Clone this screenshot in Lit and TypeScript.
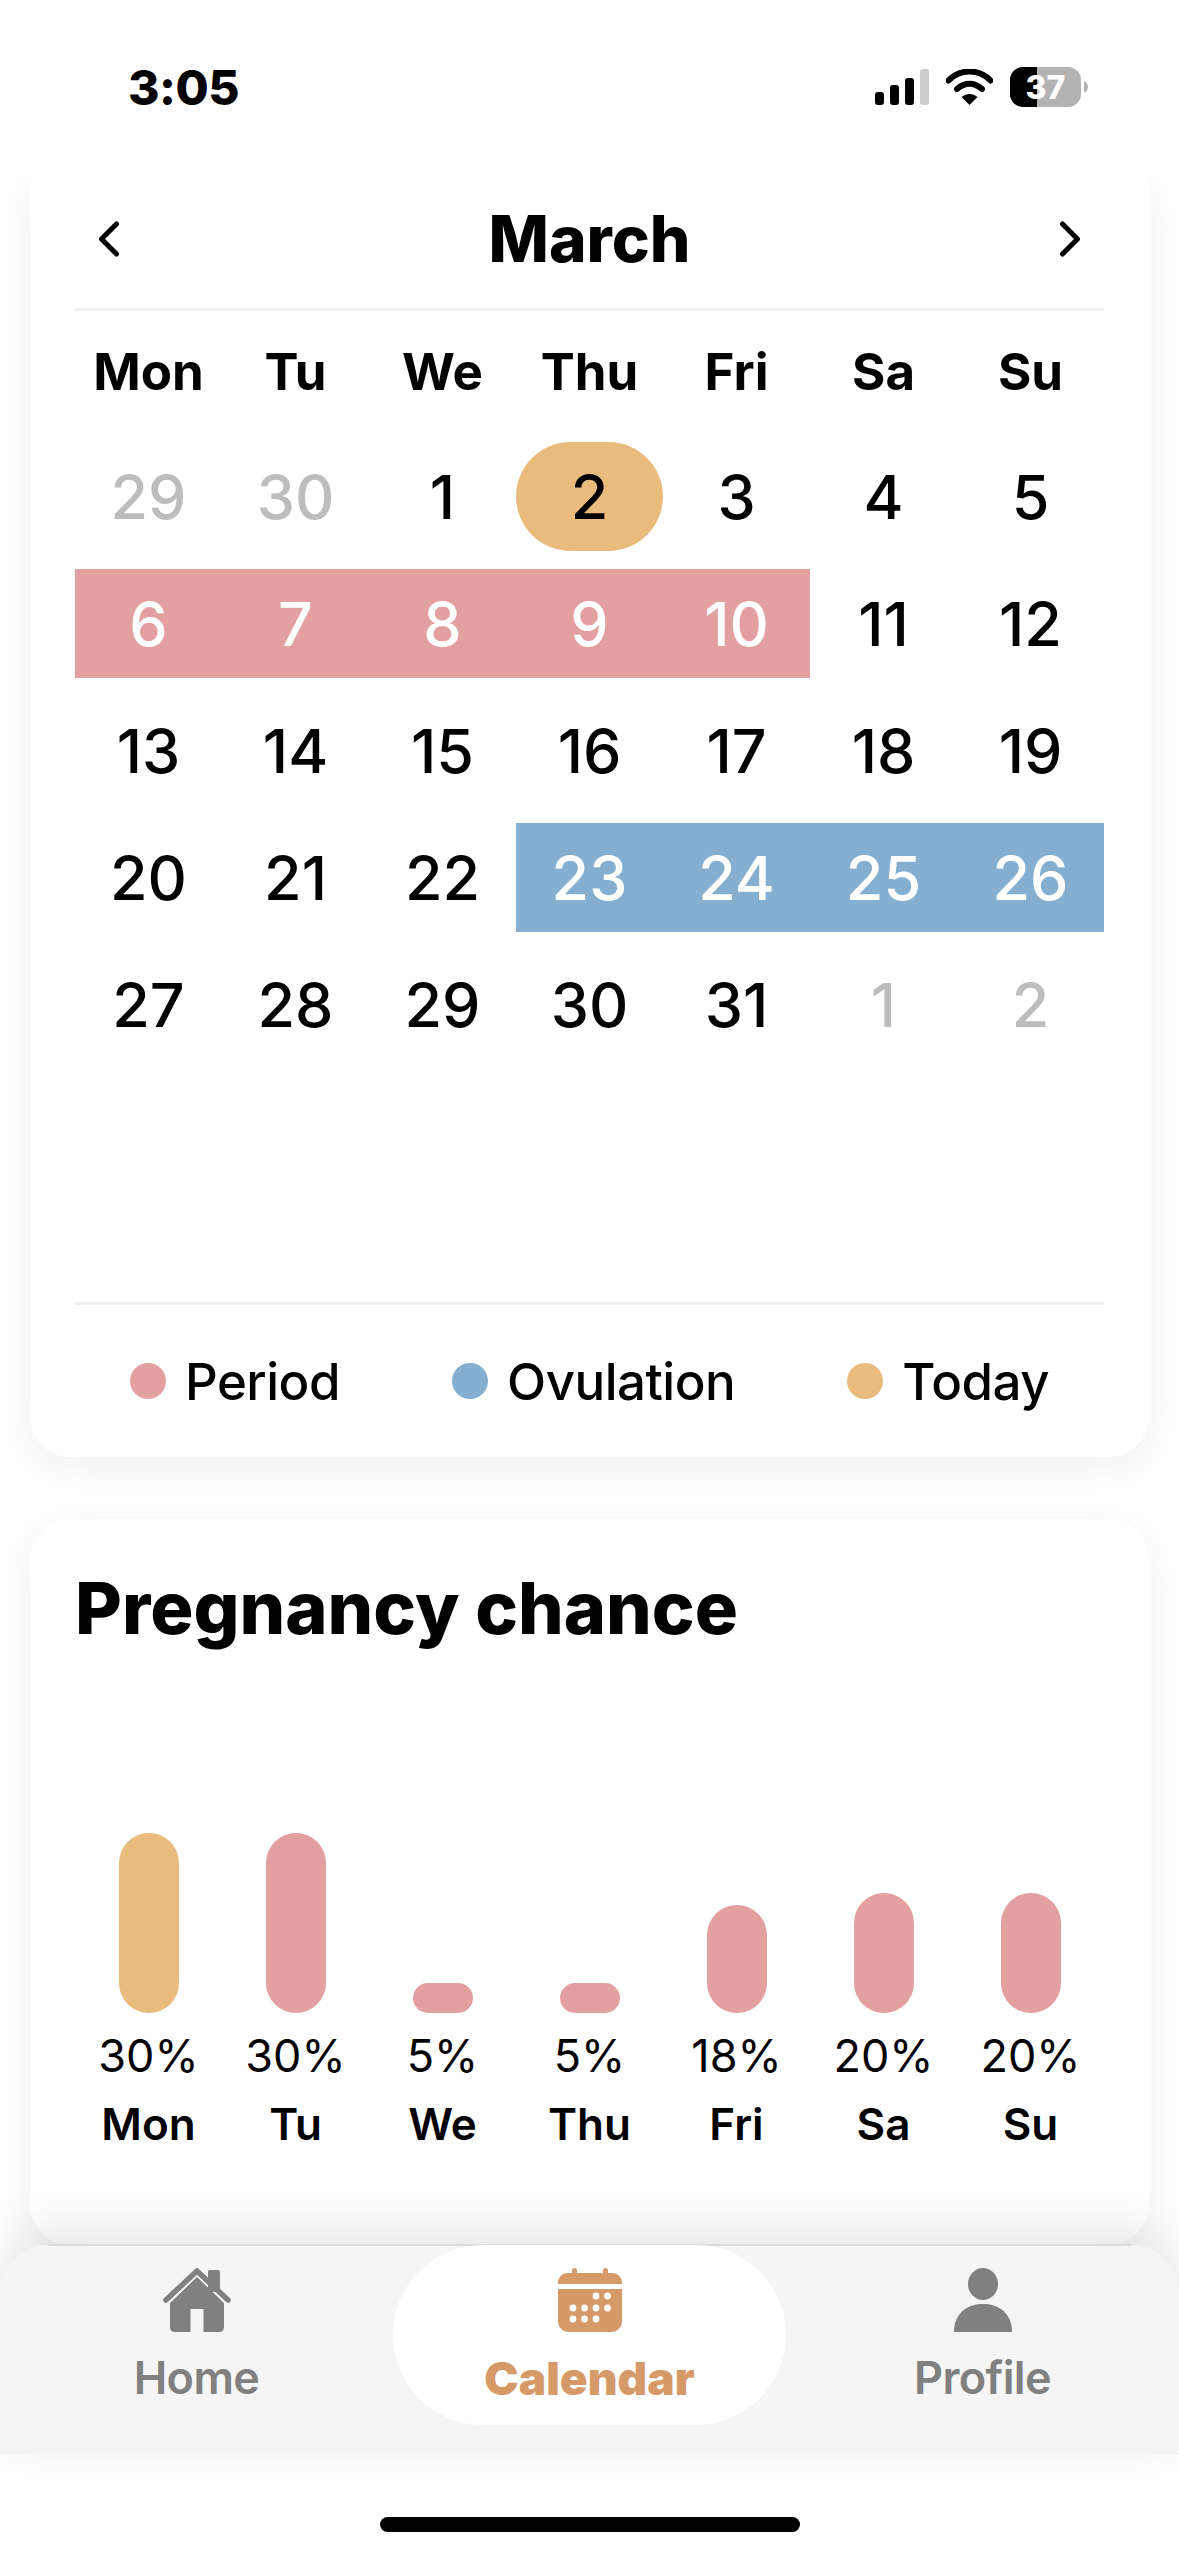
import { LitElement, html, css, svg } from 'lit';
import { customElement } from 'lit/decorators.js';

type Mark = 'muted' | 'today' | 'period' | 'ovulation' | '';

interface Day {
  label: number;
  mark: Mark;
}

const WEEKDAYS = ['Mon', 'Tu', 'We', 'Thu', 'Fri', 'Sa', 'Su'];

const markFor = (n: number): Mark => {
  if (n === 2) return 'today';
  if (n >= 6 && n <= 10) return 'period';
  if (n >= 23 && n <= 26) return 'ovulation';
  return '';
};

const DAYS: Day[] = [
  { label: 29, mark: 'muted' },
  { label: 30, mark: 'muted' },
  ...Array.from({ length: 31 }, (_, i) => ({ label: i + 1, mark: markFor(i + 1) })),
  { label: 1, mark: 'muted' },
  { label: 2, mark: 'muted' },
];

const CHANCES = [30, 30, 5, 5, 18, 20, 20];

const LEGEND = [
  { name: 'Period', color: 'period' },
  { name: 'Ovulation', color: 'ovulation' },
  { name: 'Today', color: 'today' },
];

const chevron = (d: string) => html`<svg class="chevron" viewBox="0 0 24 40">
  <path d=${d} fill="none" stroke="#000" stroke-width="5" stroke-linecap="round" stroke-linejoin="round" />
</svg>`;

const homeIcon = svg`<path d="M45 4c0-1.100.9-2 2-2h8c1.100 0 2 .9 2 2v20H45z"/>
  <path d="M3 32 34 3l31 29" fill="none" stroke="#808080" stroke-width="5.500" stroke-linecap="round" stroke-linejoin="round"/>
  <path d="M34 9 61 35v24c0 3-2 5-5 5H40.500V41h-13v23H12c-3 0-5-2-5-5V35z"/>`;

const calendarDots = [
  [38, 28], [49.5, 28],
  [15, 40], [26.5, 40], [38, 40], [49.5, 40],
  [15, 51], [26.5, 51], [38, 51],
];

const calendarIcon = svg`<path d="M14 5V2.500C14 1 15 0 16.500 0S19 1 19 2.500V5h26V2.500C45 1 46 0 47.500 0S50 1 50 2.500V5h4c6 0 10 4.500 10 10v1H0v-1C0 9.500 4 5 10 5z"/>
  <path d="M0 21h64v32c0 6-4.500 11-11 11H11C4.500 64 0 59 0 53z"/>
  ${calendarDots.map(([x, y]) => svg`<circle cx=${x} cy=${y} r="3.400" fill="#fff"/>`)}`;

const profileIcon = svg`<ellipse cx="30" cy="16" rx="15" ry="16"/>
  <path d="M1 64c0-2 .2-4 .5-6C4 44 15 36 30 36s26 8 28.500 22c.3 2 .5 4 .5 6z"/>`;

@customElement('app-root')
export class AppRoot extends LitElement {
  static styles = css`
    :host {
      display: block;
      position: relative;
      height: 2556px;
      overflow: hidden;
      background: #fff;
      font-family: Inter, 'Liberation Sans', sans-serif;
      color: #000;
    }

    .status {
      height: 177px;
      padding: 0 91px 0 128px;
      box-sizing: border-box;
      display: flex;
      justify-content: space-between;
      align-items: flex-start;
    }

    .time {
      margin-top: 63px;
      font-size: 48px;
      line-height: 50px;
      font-weight: 800;
      letter-spacing: -0.5px;
    }

    .status-icons {
      margin-top: 67px;
      display: flex;
      align-items: center;
      gap: 17px;
    }

    .content {
      height: 2068px;
      overflow: hidden;
      padding: 0 30px;
      display: flex;
      flex-direction: column;
      gap: 62px;
    }

    .card {
      flex: none;
      background: #fff;
      border-radius: 40px;
      box-shadow: 0 10px 40px rgba(0, 0, 0, 0.06);
      padding: 0 45px;
    }

    .calendar {
      height: 1280px;
      border-radius: 0 0 40px 40px;
      display: flex;
      flex-direction: column;
    }

    .month {
      height: 134px;
      box-sizing: border-box;
      flex: none;
      display: flex;
      align-items: center;
      justify-content: space-between;
      padding: 0 22px 8px;
      border-bottom: 3px solid #f0f0f0;
    }

    .month h2 {
      margin: 0;
      font-size: 64px;
      font-weight: 800;
    }

    .chevron {
      width: 24px;
      height: 40px;
    }

    .grid {
      margin-top: 4px;
      display: grid;
      grid-template-columns: repeat(7, 147px);
      grid-auto-rows: 109px;
      row-gap: 18px;
    }

    .weekday {
      display: flex;
      align-items: center;
      justify-content: center;
      font-size: 51px;
      font-weight: 700;
      padding-top: 4px;
      box-sizing: border-box;
    }

    .day {
      display: flex;
      align-items: center;
      justify-content: center;
      font-size: 61px;
      font-weight: 500;
      position: relative;
    }

    .day.muted {
      color: #bdbdbd;
    }

    .day.today span.pill {
      position: absolute;
      inset: 0;
      background: #e9bb7d;
      border-radius: 55px;
    }

    .day b {
      position: relative;
      font-weight: inherit;
    }

    .day.period {
      background: #e3a0a0;
      color: #fff;
    }

    .day.ovulation {
      background: #85afd0;
      color: #fff;
    }

    .legend {
      margin-top: auto;
      height: 152px;
      flex: none;
      border-top: 3px solid #f0f0f0;
      display: flex;
      align-items: center;
      padding: 0 55px 0 55px;
      justify-content: space-between;
      font-size: 51px;
      font-weight: 500;
      letter-spacing: -0.5px;
    }

    .legend-item {
      display: flex;
      align-items: center;
      gap: 19px;
    }

    .dot {
      width: 36px;
      height: 36px;
      border-radius: 50%;
    }

    .dot.period,
    .bar.period {
      background: #e3a0a0;
    }

    .dot.ovulation {
      background: #85afd0;
    }

    .dot.today,
    .bar.today {
      background: #e9bb7d;
    }

    .chance {
      height: 726px;
      box-sizing: border-box;
    }

    .chance h2 {
      margin: 0;
      padding-top: 45px;
      font-size: 72px;
      line-height: 87px;
      font-weight: 800;
    }

    .bars {
      margin-top: 182px;
      display: grid;
      grid-template-columns: repeat(7, 147px);
    }

    .bar-col {
      display: flex;
      flex-direction: column;
      align-items: center;
      justify-content: flex-end;
      height: 180px;
    }

    .bar {
      width: 60px;
      border-radius: 30px;
    }

    .bar.short {
      border-radius: 15px;
    }

    .pct {
      text-align: center;
      font-size: 45px;
      line-height: 52px;
      margin-top: 17px;
      font-weight: 400;
    }

    .name {
      text-align: center;
      font-size: 44px;
      line-height: 52px;
      margin-top: 16px;
      font-weight: 600;
    }

    .tabbar {
      position: absolute;
      left: 0;
      right: 0;
      top: 2245px;
      height: 210px;
      background: #f5f5f5;
      border-radius: 48px 48px 0 0;
      box-shadow: 0 -15px 50px rgba(0, 0, 0, 0.1);
      display: grid;
      grid-template-columns: 393px 393px 393px;
    }

    .tabbar::before {
      content: '';
      position: absolute;
      left: 48px;
      right: 48px;
      top: -1px;
      height: 2px;
      background: #dcdcdc;
    }

    .tab {
      height: 180px;
      display: flex;
      flex-direction: column;
      align-items: center;
      color: #808080;
      font-size: 45px;
      font-weight: 600;
      letter-spacing: -0.6px;
      padding-top: 23px;
      box-sizing: border-box;
      position: relative;
    }

    .tab svg {
      height: 64px;
      fill: #808080;
      overflow: visible;
    }

    .tab span {
      margin-top: 19px;
      line-height: 54px;
    }

    .tab.active {
      background: #fff;
      border-radius: 90px;
      color: #d69a68;
      font-size: 46px;
      font-weight: 900;
      letter-spacing: 0;
    }

    .tab.active svg {
      fill: #d69a68;
    }

    .home-indicator {
      position: absolute;
      left: 380px;
      top: 2517px;
      width: 420px;
      height: 15px;
      border-radius: 8px;
      background: #000;
    }
  `;

  private renderStatusIcons() {
    return html`
      <svg width="54" height="36" viewBox="0 0 54 36">
        <rect x="0" y="23" width="9" height="13" rx="3" fill="#000" />
        <rect x="15" y="16" width="9" height="20" rx="3" fill="#000" />
        <rect x="30" y="9" width="9" height="27" rx="3" fill="#000" />
        <rect x="45" y="0" width="9" height="36" rx="3" fill="#ccc" />
      </svg>
      <svg width="47" height="36" viewBox="0 0 47 36">
        <path d="M2.500 11.500C14-.5 33-.5 44.500 11.500" fill="none" stroke="#000" stroke-width="6" stroke-linecap="round" />
        <path d="M11 20c8-7 17-7 25 0" fill="none" stroke="#000" stroke-width="6" stroke-linecap="round" />
        <path d="M15.500 28c5-4 11-4 16 0l-8 8z" fill="#000" />
      </svg>
      <svg width="78" height="40" viewBox="0 0 78 40">
        <rect x="0" y="0" width="71" height="40" rx="13" fill="#b3b3b3" />
        <path d="M13 0h14v40H13C6 40 0 34 0 27V13C0 6 6 0 13 0z" fill="#000" />
        <path d="M74 14c2.500 1 4 3 4 6s-1.500 5-4 6z" fill="#b3b3b3" />
        <text x="35.500" y="32" text-anchor="middle" font-size="32" font-weight="800" fill="#fff">37</text>
      </svg>
    `;
  }

  private renderDay(day: Day) {
    return html`<div class="day ${day.mark}">
      ${day.mark === 'today' ? html`<span class="pill"></span>` : ''}
      <b>${day.label}</b>
    </div>`;
  }

  render() {
    return html`
      <div class="status">
        <div class="time">3:05</div>
        <div class="status-icons">${this.renderStatusIcons()}</div>
      </div>
      <div class="content">
        <section class="card calendar">
          <div class="month">
            ${chevron('M19.500 5 4.500 20l15 15')}
            <h2>March</h2>
            ${chevron('M4.500 5l15 15-15 15')}
          </div>
          <div class="grid">
            ${WEEKDAYS.map((d) => html`<div class="weekday">${d}</div>`)}
            ${DAYS.map((d) => this.renderDay(d))}
          </div>
          <div class="legend">
            ${LEGEND.map(
              (l) => html`<div class="legend-item"><span class="dot ${l.color}"></span>${l.name}</div>`,
            )}
          </div>
        </section>
        <section class="card chance">
          <h2>Pregnancy chance</h2>
          <div class="bars">
            ${CHANCES.map(
              (pct, i) => html`<div class="bar-col">
                <div
                  class="bar ${i === 0 ? 'today' : 'period'} ${pct < 10 ? 'short' : ''}"
                  style="height:${pct * 6}px"
                ></div>
              </div>`,
            )}
            ${CHANCES.map((pct) => html`<div class="pct">${pct}%</div>`)}
            ${WEEKDAYS.map((d) => html`<div class="name">${d}</div>`)}
          </div>
        </section>
      </div>
      <nav class="tabbar">
        <div class="tab">
          <svg viewBox="0 0 68 64" width="68">${homeIcon}</svg>
          <span>Home</span>
        </div>
        <div class="tab active">
          <svg viewBox="0 0 64 64" width="64">${calendarIcon}</svg>
          <span>Calendar</span>
        </div>
        <div class="tab">
          <svg viewBox="0 0 60 64" width="60">${profileIcon}</svg>
          <span>Profile</span>
        </div>
      </nav>
      <div class="home-indicator"></div>
    `;
  }
}

declare global {
  interface HTMLElementTagNameMap {
    'app-root': AppRoot;
  }
}
